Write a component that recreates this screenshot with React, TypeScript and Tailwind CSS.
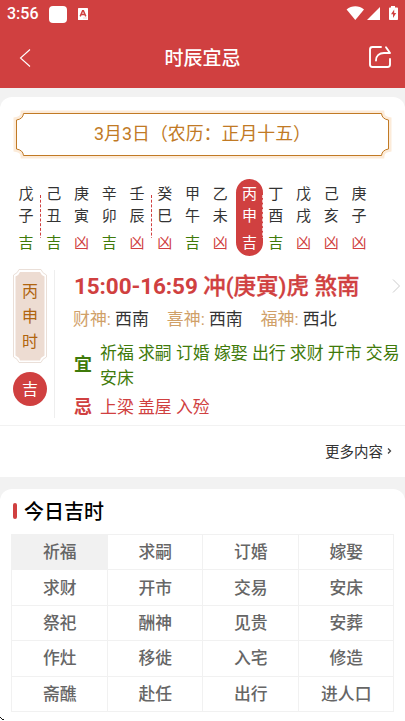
import clsx from "clsx";

type Luck = "吉" | "凶";

const HOURS: { stem: string; branch: string; luck: Luck; divider?: boolean }[] = [
  { stem: "戊", branch: "子", luck: "吉", divider: true },
  { stem: "己", branch: "丑", luck: "吉" },
  { stem: "庚", branch: "寅", luck: "凶" },
  { stem: "辛", branch: "卯", luck: "吉" },
  { stem: "壬", branch: "辰", luck: "凶", divider: true },
  { stem: "癸", branch: "巳", luck: "凶" },
  { stem: "甲", branch: "午", luck: "吉" },
  { stem: "乙", branch: "未", luck: "凶" },
  { stem: "丙", branch: "申", luck: "吉", divider: true },
  { stem: "丁", branch: "酉", luck: "吉" },
  { stem: "戊", branch: "戌", luck: "凶" },
  { stem: "己", branch: "亥", luck: "凶" },
  { stem: "庚", branch: "子", luck: "凶" },
];

const ACTIVE_HOUR = 8;

const GODS = [
  { label: "财神:", value: "西南" },
  { label: "喜神:", value: "西南" },
  { label: "福神:", value: "西北" },
];

const ACTIVITIES = [
  "祈福", "求嗣", "订婚", "嫁娶",
  "求财", "开市", "交易", "安床",
  "祭祀", "酬神", "见贵", "安葬",
  "作灶", "移徙", "入宅", "修造",
  "斋醮", "赴任", "出行", "进人口",
];

function StatusBar() {
  return (
    <div className="flex h-[28px] items-center pl-[7px] pr-[7px] text-white">
      <span className="w-[31px] text-[16px] leading-[28px] font-medium whitespace-nowrap">3:56</span>
      <span className="ml-[11px] h-[17px] w-[18px] rounded-[4px] bg-white" />
      <svg className="ml-[11px]" width="10" height="12" viewBox="0 0 10 12">
        <rect width="10" height="12" rx="0.6" fill="#fff" />
        <path d="M2.2 8.4 4.6 2.8h.8l2.4 5.6M3.2 6.6h3.6" fill="none" stroke="#d04040" strokeWidth="1.5" />
        <path d="M5.5 10h1M7.5 10h1" stroke="#e9a0a0" strokeWidth="1" />
      </svg>
      <svg className="mt-[-2px] ml-auto" width="52" height="16" viewBox="0 0 52 16" fill="#fff">
        <path d="M0.6 4.6C5.6.2 13 .2 18 4.6L9.3 15Z" />
        <path d="M34 2v13H21Z" />
        <path d="M45 1h4v1.6h2.2q.8 0 .8.8v10.8q0 .8-.8.8h-7.4q-.8 0-.8-.8V3.400q0-.8.8-.8H45Z" />
        <path d="M48.200 4.500 45 9.200h2v3.700L50.200 8h-2Z" fill="#d04040" />
      </svg>
    </div>
  );
}

function NavBar() {
  return (
    <div className="grid h-[60px] grid-cols-[1fr_auto_1fr] items-center pr-[13px] pl-[13px] text-white">
      <svg className="ml-[6px]" width="24" height="20" viewBox="0 0 24 20" fill="none" stroke="#fff" strokeWidth="1.1">
        <path d="M11 1.500 1.500 10 11 18.500" />
      </svg>
      <h1 className="pt-[2px] text-[19px] font-medium">时辰宜忌</h1>
      <svg
        className="-mt-[2px] justify-self-end"
        width="24"
        height="24"
        viewBox="0 0 24 24"
        fill="none"
        stroke="#fff"
        strokeWidth="1.900"
        strokeLinecap="round"
        strokeLinejoin="round"
      >
        <path d="M13 2H4.500Q2 2 2 4.500v15Q2 22 4.500 22h15q2.500 0 2.500-2.500V14" />
        <path d="M8 15.500C8 10.500 11.500 8 16 8h6M18 2.200 22 8" />
      </svg>
    </div>
  );
}

function DateFrame({ text }: { text: string }) {
  return (
    <div className="relative mx-[13px] flex h-[49px] items-center justify-center">
      <svg className="absolute inset-0" width="379" height="49" viewBox="0 0 379 49" fill="none">
        <path
          d="M10.500 3.500H368.500Q369 9 375.500 10V39Q369 40 368.500 45.500H10.500Q10 40 3.500 39V10Q10 9 10.500 3.500Z"
          stroke="#fcebd9"
          strokeWidth="6"
        />
        <path
          d="M10.500 3.500H368.500Q369 9 375.500 10V39Q369 40 368.500 45.500H10.500Q10 40 3.500 39V10Q10 9 10.500 3.500Z"
          fill="#fff"
          stroke="#c17a25"
        />
      </svg>
      <span className="relative text-[17.900px] text-[#c17a25]">{text}</span>
    </div>
  );
}

function HourStrip() {
  return (
    <div className="mt-[20px] ml-[12px] grid w-[361px] grid-cols-13">
      {HOURS.map((h, i) => {
        const active = i === ACTIVE_HOUR;
        return (
          <div
            key={i}
            className={clsx(
              "relative flex h-[77px] flex-col items-center pt-[5px] text-[15px] leading-[21px]",
              active ? "-mr-px ml-[2px] rounded-full bg-[#d04040] text-white" : "text-[#333]"
            )}
          >
            <span>{h.stem}</span>
            <span className="mt-px">{h.branch}</span>
            <span
              className={clsx(
                "mt-[6px]",
                !active && (h.luck === "吉" ? "text-[#3f7a0a]" : "text-[#d04040]")
              )}
            >
              {h.luck}
            </span>
            {h.divider && (
              <svg
                className={clsx("absolute top-[16px]", active ? "right-0" : "-right-px")}
                width="1"
                height="43"
                viewBox="0 0 1 43"
                stroke={active ? "#f3c4c4" : "#d04040"}
                strokeDasharray="3 1.700"
              >
                <path d="M.5 0v43" />
              </svg>
            )}
          </div>
        );
      })}
    </div>
  );
}

function HourPlaque() {
  return (
    <div className="relative flex h-[94px] w-[34px] flex-col items-center pt-[10px] text-[16px] leading-[25px] text-[#b0640e]">
      <svg className="absolute inset-0" width="34" height="94" viewBox="0 0 34 94">
        <path
          d="M6 .5H28Q29 4 33.500 6V88Q29 90 28 93.500H6Q5 90 .5 88V6Q5 4 6 .5Z"
          fill="#fff"
          stroke="#eadfd8"
        />
        <path d="M7 3H27Q28 6 31.500 7.500V86.500Q28 88 27 91.500H7Q6 88 2.500 86.500V7.500Q6 6 7 3Z" fill="#eddcd2" />
      </svg>
      <span className="relative">丙</span>
      <span className="relative">申</span>
      <span className="relative">时</span>
    </div>
  );
}

function HourDetail() {
  return (
    <div className="mt-[13px] flex h-[156px]">
      <div className="ml-[13px] w-[34px]">
        <HourPlaque />
        <div className="mt-[9px] flex h-[34px] w-[34px] items-center justify-center rounded-full bg-[#d04040] pt-px text-[16px] text-white">
          吉
        </div>
      </div>
      <div className="mt-[1px] ml-[7px] h-[148px] w-px bg-[#eee]" />
      <div className="ml-[18px] flex-1">
        <div className="flex h-[34px] items-center pl-px">
          <span className="pt-px text-[22.500px] font-bold whitespace-nowrap text-[#d04040]">
            <span className="tracking-[-0.1px]">15:00-16:59</span>{" "}
            <span className="font-medium [-webkit-text-stroke:0.3px_#d04040]">冲(庚寅)虎 煞南</span>
          </span>
          <svg className="mr-[4px] ml-auto" width="9" height="16" viewBox="0 0 9 16" fill="none" stroke="#ccc">
            <path d="M1 1.500 7.500 8 1 14.500" />
          </svg>
        </div>
        <div className="flex h-[32px] gap-[18px] text-[16.900px] leading-[32px]">
          {GODS.map((g) => (
            <span key={g.label} className="whitespace-nowrap text-[#d0a068]">
              {g.label} <span className="text-[#333]">{g.value}</span>
            </span>
          ))}
        </div>
        <div className="mt-[6px] flex items-center pl-px text-[#3f7a0a]">
          <span className="-mt-[3px] w-[26px] text-[18px] font-bold">宜</span>
          <p className="w-[302px] text-[16.900px] leading-[25px]">
            祈福 求嗣 订婚 嫁娶 出行 求财 开市 交易 安床
          </p>
        </div>
        <div className="mt-[3px] flex h-[27px] items-center pl-px text-[#d04040]">
          <span className="-mt-[3px] w-[26px] text-[18px] font-bold">忌</span>
          <p className="text-[16.900px] leading-[25px]">上梁 盖屋 入殓</p>
        </div>
      </div>
    </div>
  );
}

function LuckyTable() {
  return (
    <div className="mx-[11px] mt-[10px] grid h-[178px] grid-cols-4 grid-rows-5 border-t border-l border-[#f1f1f1]">
      {ACTIVITIES.map((name, i) => (
        <div
          key={name}
          className={clsx(
            "flex items-center justify-center border-r border-b border-[#f1f1f1] pt-px pl-px text-[16.800px] font-medium text-[#666]",
            i === 0 && "bg-[#f1f1f1]"
          )}
        >
          {name}
        </div>
      ))}
    </div>
  );
}

export default function App() {
  return (
    <div className="h-[721px] w-[405px] overflow-hidden bg-[#f2f2f2] font-['Roboto','Noto_Sans_CJK_SC',sans-serif]">
      <header className="h-[88px] bg-[#d04040]">
        <StatusBar />
        <NavBar />
      </header>

      <section className="mt-[9px] h-[380px] rounded-t-[12px] bg-white pt-[13px]">
        <DateFrame text="3月3日（农历：正月十五）" />
        <HourStrip />
        <HourDetail />
        <div className="flex h-[51px] items-center justify-end gap-[4px] border-t border-[#f2f2f2] pr-[13px] text-[#333]">
          <span className="pt-[3px] text-[14.500px]">更多内容</span>
          <svg width="5" height="8" viewBox="0 0 5 8" fill="none" stroke="#444" strokeWidth="1.300">
            <path d="M1 1.500 3.500 4 1 6.500" />
          </svg>
        </div>
      </section>

      <section className="relative mt-[12px] h-[232px] rounded-t-[12px] bg-white pt-[9px]">
        <h2 className="flex h-[26px] items-center gap-[7px] pl-[13px] text-[20px] font-medium text-black">
          <span className="h-[16px] w-[4px] rounded-full bg-[#d04040]" />
          <span className="pt-[2px]">今日吉时</span>
        </h2>
        <LuckyTable />
        <svg className="absolute bottom-0 left-0" width="5" height="5" viewBox="0 0 5 5" fill="#111">
          <path d="M0 1h1v1H0zM1 2h1v1H1zM2 3h1v1H2zM3 3h1v1H3z" />
        </svg>
      </section>
    </div>
  );
}
